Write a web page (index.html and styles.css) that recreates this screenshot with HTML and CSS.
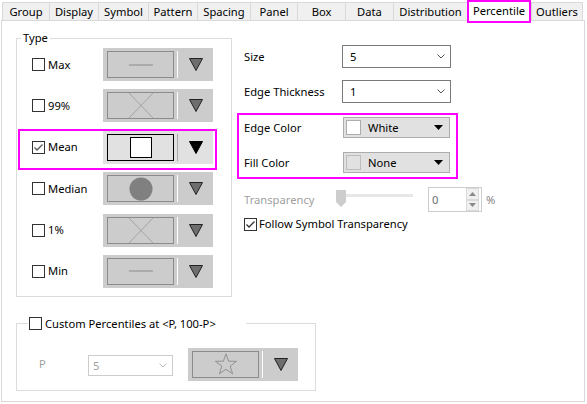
FILE: index.html
```html
<!DOCTYPE html>
<html lang="en">
<head>
    <meta charset="UTF-8">
    <title>Percentile</title>
    <link rel="stylesheet" href="styles.css">
</head>
<body>
    <!-- Pestañas -->
    <div class="tabs">
        <div class="tab">Group</div>
        <div class="tab">Display</div>
        <div class="tab">Symbol</div>
        <div class="tab">Pattern</div>
        <div class="tab">Spacing</div>
        <div class="tab">Panel</div>
        <div class="tab">Box</div>
        <div class="tab">Data</div>
        <div class="tab">Distribution</div>
        <div class="tab active">Percentile</div>
        <div class="tab last">Outliers</div>
    </div>

    <div class="panel">
        <div class="top">
            <!-- Tipo -->
            <fieldset class="group type-group">
                <legend>Type</legend>

                <div class="type-row">
                    <label class="check"><span class="box"></span>Max</label>
                    <div class="marker-btn">
                        <div class="face">
                            <svg width="24" height="2" viewBox="0 0 24 2"><line x1="0" y1="1" x2="24" y2="1" stroke="#8a8a8a"/></svg>
                        </div>
                        <span class="sep"></span>
                        <svg class="arrow" width="14" height="13" viewBox="0 0 14 13"><polygon points="0.5,0.5 13.5,0.5 7,12.5" fill="#6e6e6e" stroke="#222"/></svg>
                    </div>
                </div>

                <div class="type-row">
                    <label class="check"><span class="box"></span>99%</label>
                    <div class="marker-btn">
                        <div class="face">
                            <svg width="24" height="25" viewBox="0 0 24 25"><path d="M0 0 L24 25 M24 0 L0 25" stroke="#9a9a9a" stroke-width="0.8" fill="none"/></svg>
                        </div>
                        <span class="sep"></span>
                        <svg class="arrow" width="14" height="13" viewBox="0 0 14 13"><polygon points="0.5,0.5 13.5,0.5 7,12.5" fill="#6e6e6e" stroke="#222"/></svg>
                    </div>
                </div>

                <div class="type-row picked">
                    <label class="check"><span class="box">
                        <svg width="11" height="11" viewBox="0 0 11 11"><polyline points="1.5,5.5 4,8 9.5,2.5" fill="none" stroke="#555" stroke-width="1.3"/></svg>
                    </span>Mean</label>
                    <div class="marker-btn on">
                        <div class="face">
                            <span class="square"></span>
                        </div>
                        <span class="sep"></span>
                        <svg class="arrow" width="14" height="13" viewBox="0 0 14 13"><polygon points="0.5,0.5 13.5,0.5 7,12.5" fill="#000" stroke="#000"/></svg>
                    </div>
                </div>

                <div class="type-row">
                    <label class="check"><span class="box"></span>Median</label>
                    <div class="marker-btn">
                        <div class="face">
                            <svg width="24" height="24" viewBox="0 0 24 24"><circle cx="12" cy="12" r="11.5" fill="#808080"/></svg>
                        </div>
                        <span class="sep"></span>
                        <svg class="arrow" width="14" height="13" viewBox="0 0 14 13"><polygon points="0.5,0.5 13.5,0.5 7,12.5" fill="#6e6e6e" stroke="#222"/></svg>
                    </div>
                </div>

                <div class="type-row">
                    <label class="check"><span class="box"></span>1%</label>
                    <div class="marker-btn">
                        <div class="face">
                            <svg width="24" height="25" viewBox="0 0 24 25"><path d="M0 0 L24 25 M24 0 L0 25" stroke="#9a9a9a" stroke-width="0.8" fill="none"/></svg>
                        </div>
                        <span class="sep"></span>
                        <svg class="arrow" width="14" height="13" viewBox="0 0 14 13"><polygon points="0.5,0.5 13.5,0.5 7,12.5" fill="#6e6e6e" stroke="#222"/></svg>
                    </div>
                </div>

                <div class="type-row">
                    <label class="check"><span class="box"></span>Min</label>
                    <div class="marker-btn">
                        <div class="face">
                            <svg width="24" height="2" viewBox="0 0 24 2"><line x1="0" y1="1" x2="24" y2="1" stroke="#8a8a8a"/></svg>
                        </div>
                        <span class="sep"></span>
                        <svg class="arrow" width="14" height="13" viewBox="0 0 14 13"><polygon points="0.5,0.5 13.5,0.5 7,12.5" fill="#6e6e6e" stroke="#222"/></svg>
                    </div>
                </div>
            </fieldset>

            <!-- Propiedades -->
            <div class="right">
                <div class="row">
                    <span class="label">Size</span>
                    <div class="combo">5
                        <svg class="chev" width="8" height="5" viewBox="0 0 8 5"><polyline points="0.5,0.5 4,4 7.5,0.5" fill="none" stroke="#555"/></svg>
                    </div>
                </div>
                <div class="row">
                    <span class="label">Edge Thickness</span>
                    <div class="combo">1
                        <svg class="chev" width="8" height="5" viewBox="0 0 8 5"><polyline points="0.5,0.5 4,4 7.5,0.5" fill="none" stroke="#555"/></svg>
                    </div>
                </div>

                <div class="highlight">
                    <div class="row color-row">
                        <span class="label">Edge Color</span>
                        <div class="color-combo">
                            <span class="swatch white"></span>White
                            <svg class="tri" width="9" height="5" viewBox="0 0 9 5"><polygon points="0,0 9,0 4.5,5" fill="#000"/></svg>
                        </div>
                    </div>
                    <div class="row color-row">
                        <span class="label">Fill Color</span>
                        <div class="color-combo">
                            <span class="swatch none"></span>None
                            <svg class="tri" width="9" height="5" viewBox="0 0 9 5"><polygon points="0,0 9,0 4.5,5" fill="#000"/></svg>
                        </div>
                    </div>
                </div>

                <div class="row trans-row">
                    <span class="label disabled">Transparency</span>
                    <svg class="slider" width="77" height="25" viewBox="0 0 77 25">
                        <rect x="10" y="7" width="67" height="3" fill="#e7e7e7"/>
                        <polygon points="0,3 10,3 10,15 5,20 0,15" fill="#cdcdcd"/>
                    </svg>
                    <div class="spin">
                        <span class="spin-val">0</span>
                        <div class="spin-btns">
                            <span class="spin-btn"><svg width="7" height="4" viewBox="0 0 7 4"><polygon points="0,4 7,4 3.5,0" fill="#8a8a8a"/></svg></span>
                            <span class="spin-btn"><svg width="7" height="4" viewBox="0 0 7 4"><polygon points="0,0 7,0 3.5,4" fill="#8a8a8a"/></svg></span>
                        </div>
                    </div>
                    <span class="pct">%</span>
                </div>

                <label class="check follow"><span class="box">
                    <svg width="11" height="11" viewBox="0 0 11 11"><polyline points="1.5,5.5 4,8 9.5,2.5" fill="none" stroke="#333" stroke-width="1.3"/></svg>
                </span>Follow Symbol Transparency</label>
            </div>
        </div>

        <!-- Percentiles personalizados -->
        <fieldset class="group custom-group">
            <legend><label class="check"><span class="box"></span>Custom Percentiles at &lt;P, 100-P&gt;</label></legend>
            <div class="custom-row">
                <span class="p-label disabled">P</span>
                <div class="combo off">5
                    <svg class="chev" width="8" height="5" viewBox="0 0 8 5"><polyline points="0.5,0.5 4,4 7.5,0.5" fill="none" stroke="#bbb"/></svg>
                </div>
                <div class="marker-btn star-btn">
                    <div class="face">
                        <svg width="24" height="22" viewBox="0 0 24 22"><polygon points="12,0.8 14.6,8.2 22.6,8.3 16.2,13.1 18.6,20.8 12,16.3 5.4,20.8 7.8,13.1 1.4,8.3 9.4,8.2" fill="none" stroke="#8a8a8a" stroke-width="0.9"/></svg>
                    </div>
                    <span class="sep"></span>
                    <svg class="arrow" width="14" height="13" viewBox="0 0 14 13"><polygon points="0.5,0.5 13.5,0.5 7,12.5" fill="#6e6e6e" stroke="#222"/></svg>
                </div>
            </div>
        </fieldset>
    </div>
</body>
</html>
```

FILE: styles.css
```css
/* General */
body {
    margin: 0;
    background: #fff;
    color: #000;
    font-family: "Segoe UI", "Noto Sans", sans-serif;
    font-size: 11.2px;
    line-height: 16px;
}

/* Pestañas */
.tabs {
    display: grid;
    grid-template-columns: 47px 49px 50px 49px 53px 47px 48px 48px 74px 64px 52px;
    align-items: end;
    height: 20px;
    padding-left: 2px;
    position: relative;
    z-index: 1;
}

.tab {
    box-sizing: border-box;
    height: 18px;
    border: 1px solid #d9d9d9;
    border-bottom: 0;
    border-right: 0;
    background: #f0f0f0;
    text-align: center;
    line-height: 17px;
    white-space: nowrap;
}

.tab.last {
    border-right: 1px solid #d9d9d9;
}

.tab.active {
    height: 23px;
    margin-bottom: -3px;
    border: 2px solid #ff00ff;
    background: #fff;
}

/* Panel */
.panel {
    box-sizing: border-box;
    width: 584px;
    height: 382px;
    margin-left: 1px;
    border: 1px solid #d9d9d9;
    padding: 9px 0 0 14px;
}

.top {
    display: flex;
    align-items: flex-start;
}

.group {
    margin: 0;
    min-width: 0;
    border: 1px solid #dcdcdc;
}

.group legend {
    line-height: 16px;
}

.type-group {
    box-sizing: border-box;
    width: 216px;
    padding: 2px 0 8px 15px;
}

.type-group legend {
    padding: 0 2px;
    margin-left: -11px;
}

/* Casillas */
.check {
    display: flex;
    align-items: center;
}

.box {
    box-sizing: border-box;
    width: 13px;
    height: 13px;
    border: 1px solid #333;
    background: #fff;
    margin-right: 3px;
    display: flex;
    align-items: center;
    justify-content: center;
    flex: none;
}

.type-row {
    display: flex;
    align-items: center;
    width: 181px;
    height: 33px;
    margin-bottom: 8.4px;
}

.type-row:last-child {
    margin-bottom: 0;
}

.type-row .check {
    width: 71px;
}

/* Marco de la fila seleccionada */
.type-row.picked {
    position: relative;
}

.type-row.picked::after {
    content: "";
    position: absolute;
    left: -14px;
    right: -4px;
    top: -2px;
    bottom: -6px;
    border: 2px solid #ff00ff;
}

/* Botón de símbolo */
.marker-btn {
    box-sizing: border-box;
    display: flex;
    align-items: center;
    width: 110px;
    height: 33px;
    padding: 3px 0 3px 4px;
    background: #cccccc;
    flex: none;
}

.face {
    box-sizing: border-box;
    width: 67px;
    height: 27px;
    border: 1px solid #8c8c8c;
    display: flex;
    align-items: center;
    justify-content: center;
}

.sep {
    width: 1px;
    height: 27px;
    margin-left: 3px;
    background: #fff;
}

.arrow {
    margin-left: 11px;
}

.marker-btn.on {
    background: #e1e1e1;
}

.marker-btn.on .face {
    border-color: #000;
}

.marker-btn.on .sep {
    background: #a8a8a8;
}

.square {
    box-sizing: border-box;
    width: 22px;
    height: 21px;
    border: 1px solid #000;
    background: #fff;
}

/* Columna derecha */
.right {
    width: 221px;
    margin-left: 5px;
    padding-top: 15px;
}

.row {
    display: flex;
    align-items: center;
    height: 23px;
    padding-left: 7px;
    margin-bottom: 12px;
}

.row .label {
    width: 98px;
    flex: none;
}

.combo {
    box-sizing: border-box;
    display: flex;
    align-items: center;
    width: 109px;
    height: 23px;
    padding-left: 7px;
    border: 1px solid #7a7a7a;
    background: #fff;
    flex: none;
}

.chev {
    margin-left: auto;
    margin-right: 5px;
}

.highlight {
    box-sizing: border-box;
    width: 221px;
    margin-top: -2px;
    padding: 2px 0 4px 5px;
    border: 2px solid #ff00ff;
}

.color-row {
    height: 21px;
    padding-left: 0;
    margin-bottom: 14px;
}

.color-row:last-child {
    margin-bottom: 0;
}

.color-row .label {
    width: 99px;
}

.color-combo {
    box-sizing: border-box;
    display: flex;
    align-items: center;
    width: 107px;
    height: 21px;
    padding-left: 2px;
    border: 1px solid #adadad;
    background: #e1e1e1;
}

.swatch {
    box-sizing: border-box;
    width: 15px;
    height: 15px;
    margin-right: 7px;
    border: 1px solid #adadad;
}

.swatch.white {
    background: #fff;
}

.swatch.none {
    background: #e1e1e1;
    border-color: #bdbdbd;
}

.tri {
    margin-left: auto;
    margin-right: 6px;
}

.disabled {
    color: #a0a0a0;
}

.trans-row {
    height: 25px;
    margin-top: 8px;
    margin-bottom: 4px;
}

.trans-row .label {
    width: 92px;
}

.slider {
    flex: none;
}

.spin {
    box-sizing: border-box;
    display: flex;
    flex: none;
    width: 54px;
    height: 25px;
    margin-left: 15px;
    border: 1px solid #cccccc;
    background: #fff;
}

.spin-val {
    padding-left: 3px;
    line-height: 23px;
    color: #6d6d6d;
}

.spin-btns {
    display: flex;
    flex-direction: column;
    justify-content: center;
    margin-left: auto;
    margin-right: 2px;
}

.spin-btn {
    box-sizing: border-box;
    width: 13px;
    height: 11.5px;
    border: 1px solid #dadada;
    background: #f0f0f0;
    display: flex;
    align-items: center;
    justify-content: center;
}

.pct {
    margin-left: 4px;
    color: #808080;
    flex: none;
}

.follow {
    padding-left: 7px;
    white-space: nowrap;
}

.follow .box {
    margin-right: 2px;
}

/* Percentiles personalizados */
.custom-group {
    box-sizing: border-box;
    width: 300px;
    margin-top: 19px;
    padding: 16px 0 9px 22px;
}

.custom-group legend {
    padding: 0 30px 0 1px;
    margin-left: -11px;
}

.custom-row {
    display: flex;
    align-items: center;
}

.p-label {
    width: 49px;
}

.combo.off {
    width: 85px;
    height: 21px;
    margin-top: 3px;
    padding-left: 4px;
    border-color: #cccccc;
    color: #a0a0a0;
}

.star-btn {
    margin-left: 15px;
}
```
